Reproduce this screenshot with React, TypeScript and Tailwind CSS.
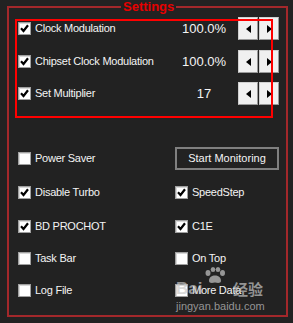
import React from 'react';

const Check = ({ checked }: { checked: boolean }) => (
  <span className="flex w-[13px] h-[13px] shrink-0 items-center justify-center border border-[#a0a0a0] bg-white shadow-[inset_1px_1px_0_#d8d8d8]">
    {checked && (
      <svg width="9" height="9" viewBox="0 0 9 9">
        <path d="M1 4.3 L3.5 7 L8 1.3" fill="none" stroke="#000" strokeWidth="2.2" />
      </svg>
    )}
  </span>
);

const Option = ({ label, checked }: { label: string; checked: boolean }) => (
  <div className="flex h-[23px] items-center">
    <Check checked={checked} />
    <span className="ml-[4px] text-[11px] tracking-[-0.25px] text-[#f4f4f4] whitespace-nowrap">{label}</span>
  </div>
);

const Arrow = ({ dir }: { dir: 'left' | 'right' }) => (
  <button className="flex w-[20px] h-[23px] items-center justify-center bg-[#f0f0f0] border border-[#d0d0d0] border-r-[#9a9a9a] border-b-[#9a9a9a]">
    <svg width="5" height="8" viewBox="0 0 5 8">
      {dir === 'left' ? <path d="M5 0 L0 4 L5 8 Z" fill="#000" /> : <path d="M0 0 L5 4 L0 8 Z" fill="#000" />}
    </svg>
  </button>
);

const Slider = ({ label, value, className }: { label: string; value: string; className?: string }) => (
  <div className={`flex h-[23px] items-center ${className ?? ''}`}>
    <div className="w-[161px] flex items-center">
      <Check checked />
      <span className="ml-[4px] text-[11px] tracking-[-0.25px] text-[#f4f4f4] whitespace-nowrap">{label}</span>
    </div>
    <div className="w-[50px] text-center text-[13px] text-[#f4f4f4]">{value}</div>
    <div className="ml-[9px] flex gap-[1px]">
      <Arrow dir="left" />
      <Arrow dir="right" />
    </div>
  </div>
);

const App = () => {
  return (
    <div className="relative w-[293px] h-[323px] bg-[#222222] pt-[6px] pl-[7px] font-['Liberation_Sans',Arial,sans-serif] overflow-hidden">
      <div className="relative w-[281px] h-[311px] border-2 border-[#a3282b] pt-[9px] pl-[9px]">
        <span className="absolute -top-[9px] left-[112px] px-[2px] bg-[#222222] text-[13px] leading-[15px] font-bold text-[#e60000]">
          Settings
        </span>

        <Slider label="Clock Modulation" value="100.0%" />
        <Slider label="Chipset Clock Modulation" value="100.0%" className="mt-[10px]" />
        <Slider label="Set Multiplier" value="17" className="mt-[9px]" />

        <div className="mt-[42px] grid grid-cols-[157px_1fr]">
          <Option label="Power Saver" checked={false} />
          <button className="w-[104px] h-[23px] border-2 border-[#808080] text-[11px] text-[#f4f4f4]">Start Monitoring</button>
          <div className="col-span-2 h-[11px]" />
          <Option label="Disable Turbo" checked />
          <Option label="SpeedStep" checked />
          <div className="col-span-2 h-[11px]" />
          <Option label="BD PROCHOT" checked />
          <Option label="C1E" checked />
          <div className="col-span-2 h-[9px]" />
          <Option label="Task Bar" checked={false} />
          <Option label="On Top" checked={false} />
          <div className="col-span-2 h-[9px]" />
          <Option label="Log File" checked={false} />
          <Option label="More Data" checked={false} />
        </div>
      </div>

      {/* red highlight box drawn over the top rows */}
      <div className="pointer-events-none absolute left-[15px] top-[19px] w-[258px] h-[99px] border-2 border-[#ff0000]" />

      {/* watermark */}
      <div className="pointer-events-none absolute left-[176px] top-[266px] w-[92px] h-[50px] text-[rgba(200,200,200,0.7)]">
        <svg width="22" height="17" viewBox="0 0 22 17" className="absolute left-[28px] top-[1px]" fill="currentColor">
          <ellipse cx="4" cy="6" rx="2.5" ry="3" />
          <ellipse cx="9" cy="2.5" rx="2.3" ry="2.5" />
          <ellipse cx="14" cy="2.5" rx="2.3" ry="2.5" />
          <ellipse cx="18.5" cy="6" rx="2.5" ry="3" />
          <path d="M5 14 C5 10 8 8.5 11 8.5 C14 8.5 17 10 17 14 C17 16 14.5 16.5 11 15.5 C7.5 16.5 5 16 5 14 Z" />
        </svg>
        <span className="absolute left-0 top-[14px] text-[17px] font-bold leading-[18px]">Bai</span>
        <span className="absolute left-[57px] top-[14px] text-[15px] font-bold leading-[18px] font-['Noto_Sans_CJK_SC',sans-serif]">经验</span>
        <span className="absolute left-0 top-[34px] text-[11px] leading-[13px]">jingyan.baidu.com</span>
      </div>
    </div>
  );
};

export default App;
